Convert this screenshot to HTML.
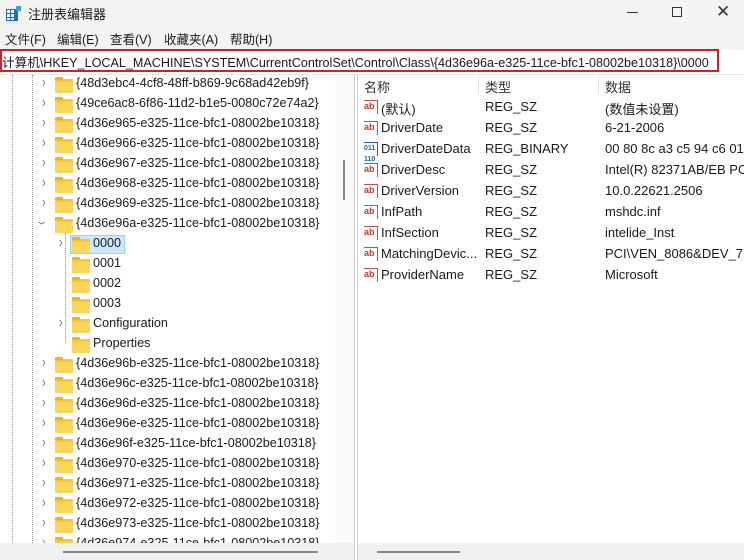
<!DOCTYPE html><html><head><meta charset="utf-8"><style>
*{margin:0;padding:0;box-sizing:border-box}
body{width:744px;height:560px;overflow:hidden;background:#fff;font-family:"Liberation Sans","Noto Sans CJK SC",sans-serif;font-size:13px;color:#1a1a1a;position:relative}
.a{position:absolute;white-space:nowrap}
.t{font-size:12.6px}
.fold{position:absolute;width:18px;height:14px;background:#f5c842;border-radius:1px}
.fold:before{content:"";position:absolute;left:0;top:-2px;width:8px;height:3px;background:#e8b42c;border-radius:1px 1px 0 0}
.fold:after{content:"";position:absolute;left:0;top:3px;width:18px;height:11px;background:#fbd65a}
.chev{position:absolute;font-size:11px;color:#777;transform:scaleY(1.4)}
.ab{position:absolute;width:14px;height:14px;border:1px solid #c0504d;border-left:none;border-bottom:none;font-size:9px;color:#c0392b;line-height:11px;font-weight:bold}
</style></head><body>
<div class="a" style="left:0;top:0;width:744px;height:50px;background:#f3f3f3"></div>
<svg class="a" style="top:6px;left:6px" width="16" height="16"><rect x="0" y="3" width="12" height="12" fill="#1f6fc8"/><g fill="#fff"><rect x="1" y="4" width="3" height="3"/><rect x="5" y="4" width="3" height="3"/><rect x="1" y="8" width="3" height="3"/><rect x="5" y="8" width="3" height="3"/><rect x="1" y="12" width="3" height="2"/><rect x="5" y="12" width="3" height="2"/></g><rect x="10" y="0" width="5" height="5" fill="#3ea0e8"/></svg>
<div class="a" style="left:28px;top:4px;font-size:13px">注册表编辑器</div>
<div class="a" style="left:627px;top:12px;width:11px;height:1px;background:#333"></div>
<div class="a" style="left:672px;top:7px;width:10px;height:10px;border:1px solid #333"></div>
<div class="a" style="left:716px;top:2px;font-size:17px;color:#333">✕</div>
<div class="a" style="left:5px;top:29px;font-size:12.5px">文件(F)</div>
<div class="a" style="left:57px;top:29px;font-size:12.5px">编辑(E)</div>
<div class="a" style="left:110px;top:29px;font-size:12.5px">查看(V)</div>
<div class="a" style="left:164px;top:29px;font-size:12.5px">收藏夹(A)</div>
<div class="a" style="left:230px;top:29px;font-size:12.5px">帮助(H)</div>
<div class="a" style="left:0;top:49px;width:719px;height:23px;border:2px solid #d0202a;background:#fff"></div>
<div class="a" style="left:2px;top:52px;font-size:12.6px">计算机\HKEY_LOCAL_MACHINE\SYSTEM\CurrentControlSet\Control\Class\{4d36e96a-e325-11ce-bfc1-08002be10318}\0000</div>
<div class="a" style="left:0;top:74px;width:744px;height:1px;background:#e6e6e6"></div>
<div class="a" style="left:12px;top:75px;height:470px;border-left:1px dotted #999"></div>
<div class="a" style="left:32px;top:75px;height:470px;border-left:1px dotted #999"></div>
<div class="a" style="left:65px;top:233px;height:110px;border-left:1px dotted #999"></div>
<div id="tree"></div>
<div class="a" style="left:335px;top:75px;width:19px;height:468px;background:#fafafa"></div>
<div class="a" style="left:343px;top:160px;width:2px;height:40px;background:#888"></div>
<div class="a" style="left:354px;top:75px;width:1px;height:485px;background:#ccc"></div>
<div class="a" style="left:357px;top:75px;width:1px;height:485px;background:#ccc"></div>
<div class="a" style="left:0;top:543px;width:354px;height:17px;background:#f0f0f0"></div>
<div class="a" style="left:63px;top:551px;width:255px;height:2px;background:#888"></div>
<div class="a" style="left:358px;top:543px;width:386px;height:17px;background:#f0f0f0"></div>
<div class="a" style="left:377px;top:551px;width:83px;height:2px;background:#888"></div>
<div class="a" style="left:364px;top:77px;color:#333">名称</div>
<div class="a" style="left:478px;top:76px;width:1px;height:18px;background:#e3e3e3"></div>
<div class="a" style="left:485px;top:77px;color:#333">类型</div>
<div class="a" style="left:598px;top:76px;width:1px;height:18px;background:#e3e3e3"></div>
<div class="a" style="left:605px;top:77px;color:#333">数据</div>
<div id="vals"></div>
<script>
var t=[["{48d3ebc4-4cf8-48ff-b869-9c68ad42eb9f}",0,1],["{49ce6ac8-6f86-11d2-b1e5-0080c72e74a2}",0,1],["{4d36e965-e325-11ce-bfc1-08002be10318}",0,1],["{4d36e966-e325-11ce-bfc1-08002be10318}",0,1],["{4d36e967-e325-11ce-bfc1-08002be10318}",0,1],["{4d36e968-e325-11ce-bfc1-08002be10318}",0,1],["{4d36e969-e325-11ce-bfc1-08002be10318}",0,1],["{4d36e96a-e325-11ce-bfc1-08002be10318}",0,2],["0000",1,1],["0001",1,0],["0002",1,0],["0003",1,0],["Configuration",1,1],["Properties",1,0],["{4d36e96b-e325-11ce-bfc1-08002be10318}",0,1],["{4d36e96c-e325-11ce-bfc1-08002be10318}",0,1],["{4d36e96d-e325-11ce-bfc1-08002be10318}",0,1],["{4d36e96e-e325-11ce-bfc1-08002be10318}",0,1],["{4d36e96f-e325-11ce-bfc1-08002be10318}",0,1],["{4d36e970-e325-11ce-bfc1-08002be10318}",0,1],["{4d36e971-e325-11ce-bfc1-08002be10318}",0,1],["{4d36e972-e325-11ce-bfc1-08002be10318}",0,1],["{4d36e973-e325-11ce-bfc1-08002be10318}",0,1],["{4d36e974-e325-11ce-bfc1-08002be10318}",0,1]];
var h="";t.forEach(function(r,i){var y=76+i*20,o=r[1]?17:0;
if(i==8)h+='<div class="a" style="left:70px;top:'+(y-1)+'px;width:55px;height:19px;background:#cce8ff;border:1px solid #99d1ff"></div>';
if(r[2]==1)h+='<div class="chev" style="left:'+(42+o)+'px;top:'+(y+1)+'px">›</div>';
if(r[2]==2)h+='<div class="chev" style="left:'+(40+o)+'px;top:'+(y+1)+'px;transform:rotate(90deg) scaleY(1.4)">›</div>';
h+='<div class="fold" style="left:'+(55+o)+'px;top:'+(y+3)+'px"></div><div class="a t" style="left:'+(76+o)+'px;top:'+(y)+'px">'+r[0]+'</div>'});
document.getElementById("tree").innerHTML=h;
var v=[["(默认)","REG_SZ","(数值未设置)"],["DriverDate","REG_SZ","6-21-2006"],["DriverDateData","REG_BINARY","00 80 8c a3 c5 94 c6 01"],["DriverDesc","REG_SZ","Intel(R) 82371AB/EB PCI"],["DriverVersion","REG_SZ","10.0.22621.2506"],["InfPath","REG_SZ","mshdc.inf"],["InfSection","REG_SZ","intelide_Inst"],["MatchingDevic...","REG_SZ","PCI\\VEN_8086&DEV_711"],["ProviderName","REG_SZ","Microsoft"]];
h="";v.forEach(function(r,i){var y=99+i*21;
h+=(i==2?'<div class="ab" style="left:364px;top:'+(y+1)+'px;color:#2a5caa;border-color:#2a5caa;font-size:7px">011<br>110</div>':'<div class="ab" style="left:364px;top:'+(y+1)+'px">ab</div>')+'<div class="a" style="left:381px;top:'+y+'px">'+r[0]+'</div><div class="a" style="left:485px;top:'+y+'px">'+r[1]+'</div><div class="a" style="left:605px;top:'+y+'px">'+r[2]+'</div>'});
document.getElementById("vals").innerHTML=h;
</script>
</body></html>
